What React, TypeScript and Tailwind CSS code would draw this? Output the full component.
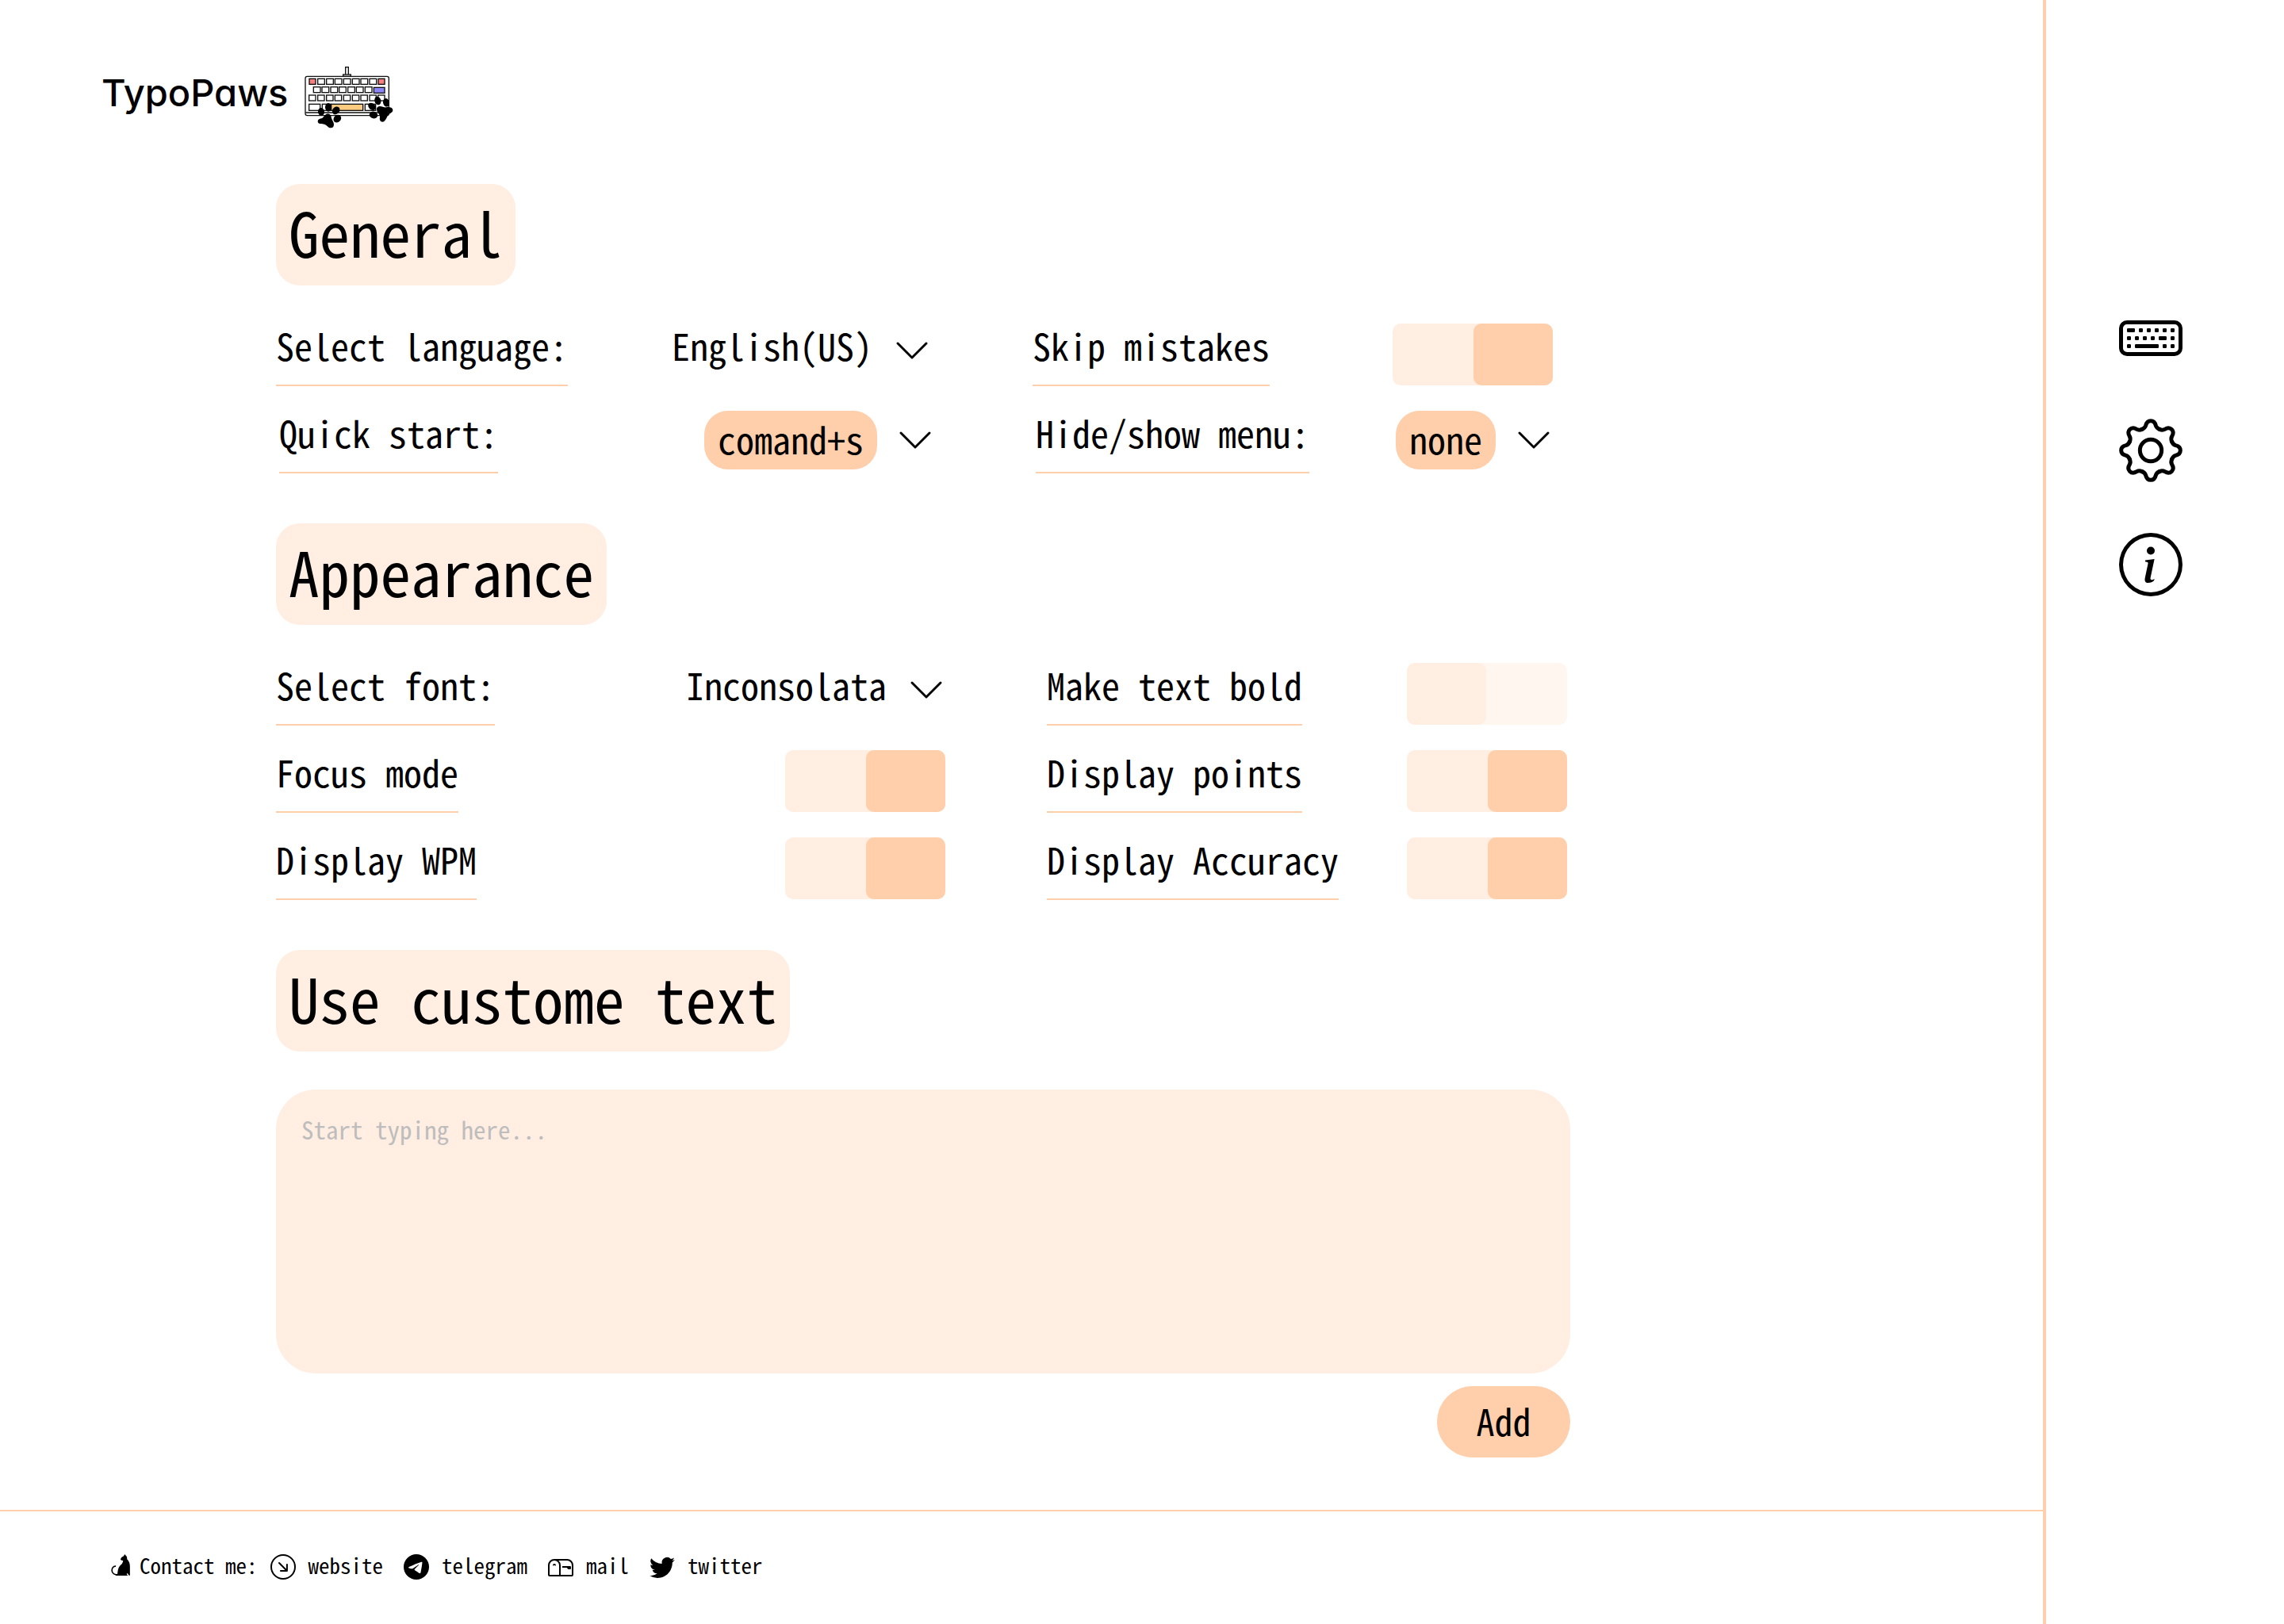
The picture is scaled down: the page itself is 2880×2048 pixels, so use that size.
import { useId } from "react";
import type { ReactNode } from "react";
import {
  BsArrowDownRightCircle,
  BsChevronDown,
  BsInfoCircle,
  BsKeyboard,
  BsMailbox,
  BsTelegram,
  BsTwitter,
} from "react-icons/bs";

function KeyboardPawsLogo() {
  const keys: [number, number, number, string][] = [
    [837, 118, 24, "#f77f80"],
    ...[869, 902, 934, 967, 1000, 1032, 1065].map((x): [number, number, number, string] => [x, 118, 26, "#fff"]),
    [1098, 118, 24, "#f77f80"],
    ...[853, 885, 918, 950, 983, 1015, 1048].map((x): [number, number, number, string] => [x, 149, 26, "#fff"]),
    [1081, 151, 41, "#8b85f7"],
    ...[836, 869, 902, 934, 967, 1000, 1032, 1065, 1097].map((x): [number, number, number, string] => [x, 180, 25, "#fff"]),
  ];
  return (
    <svg viewBox="816 69 342 240" className="h-20 w-[114px]" aria-hidden="true">
      <g stroke="#111" strokeWidth="4" fill="#fff">
        <rect x="974" y="74" width="11" height="30" />
        <rect x="965" y="102" width="29" height="7" />
        <rect x="822" y="109" width="316" height="148" rx="7" />
        <path d="M823 246H1137" />
        {keys.map(([x, y, w, fill]) => (
          <rect key={`${x}-${y}`} x={x} y={y} width={w} height={21} fill={fill} />
        ))}
        <rect x="836" y="214" width="42" height="24" />
        <rect x="886" y="214" width="32" height="24" />
        <rect x="920" y="214" width="120" height="24" fill="#fbcb80" />
        <rect x="1048" y="214" width="40" height="24" />
      </g>
      <g fill="#000">
        <ellipse cx="882" cy="243" rx="12" ry="15" transform="rotate(-8 882 243)" />
        <ellipse cx="909" cy="226" rx="12" ry="16" />
        <ellipse cx="938" cy="238" rx="13" ry="16" transform="rotate(40 938 238)" />
        <ellipse cx="943" cy="269" rx="13" ry="16" transform="rotate(45 943 269)" />
        <path d="M869 279c0-7 6-9 14-11 8-3 11-14 20-17 10-2 17 4 17 12 1 10 10 17 10 27 0 9-5 15-13 14-9-1-14-11-23-14-8-3-25 2-25-11z" />
        <ellipse cx="1096" cy="201" rx="12" ry="16" transform="rotate(-15 1096 201)" />
        <ellipse cx="1128" cy="208" rx="12" ry="16" transform="rotate(-15 1128 208)" />
        <ellipse cx="1074" cy="223" rx="12" ry="16" transform="rotate(-50 1074 223)" />
        <ellipse cx="1080" cy="255" rx="16" ry="13" transform="rotate(10 1080 255)" />
        <path d="M1092 235c-1-8 4-13 12-13 9 0 16 5 24 4 10-2 24 0 25 10 0 10-10 11-16 17-7 7-10 27-22 28-11 0-13-10-11-18 1-11-11-17-12-28z" />
      </g>
    </svg>
  );
}

function GearIcon() {
  return (
    <svg viewBox="-120 -120 240 240" className="size-20" fill="none" stroke="currentColor" strokeWidth="15" strokeLinecap="round" aria-hidden="true">
      {[0, 45, 90, 135, 180, 225, 270, 315].map((angle) => (
        <path
          key={angle}
          transform={`rotate(${angle})`}
          d="M-33 -80C-25 -83 -21 -87 -19 -94C-16 -107 -9 -112 0 -112C9 -112 16 -107 19 -94C21 -87 25 -83 33 -80"
        />
      ))}
      <circle r="41" />
    </svg>
  );
}

function CatIcon() {
  return (
    <svg viewBox="60 242 72 82" className="h-[27px] w-6" aria-hidden="true">
      <path d="M78 288C68 287 62 296 63 305C64 316 72 321 88 321" fill="none" stroke="currentColor" strokeWidth="5" />
      <path
        fill="currentColor"
        d="M112 242l5 6c4 3 4 8 4 13 8 8 11 17 11 28v34h-4l-5-8-4 3 5 6H78v-3l6-3c2-12 2-25 12-34 7-6 9-11 10-18-5 1-9-1-10-4 1-5 4-9 9-11 3-1 5-5 7-9z"
      />
    </svg>
  );
}

function SectionTitle({ children }: { children: ReactNode }) {
  return (
    <h2 className="w-fit rounded-[30px] bg-[#ffeee1] px-4 pb-[9px] text-[77px] leading-[119px]">
      {children}
    </h2>
  );
}

function Field({ label, children }: { label: string; children: (id: string) => ReactNode }) {
  const id = useId();
  return (
    <div className="flex h-[78px] items-start justify-between">
      <label htmlFor={id} className="h-[79px] border-b-2 border-[#ffceab] text-[46px] leading-[54px] whitespace-nowrap">
        {label}
      </label>
      {children(id)}
    </div>
  );
}

function SelectField({ label, value }: { label: string; value: string }) {
  return (
    <Field label={label}>
      {(id) => (
        <div className="flex items-start gap-[26px]">
          <select id={id} className="-mt-1.5 appearance-none bg-transparent text-[46px] leading-[66px]">
            <option>{value}</option>
          </select>
          <BsChevronDown className="mt-[10px] size-12" aria-hidden="true" />
        </div>
      )}
    </Field>
  );
}

function ShortcutField({ label, value }: { label: string; value: string }) {
  return (
    <Field label={label}>
      {(id) => (
        <div className="flex items-center gap-6">
          <select id={id} className="appearance-none rounded-[30px] bg-[#ffceab] px-[17px] pb-1 text-[46px] leading-[70px]">
            <option>{value}</option>
          </select>
          <BsChevronDown className="size-12" aria-hidden="true" />
        </div>
      )}
    </Field>
  );
}

function ToggleField({ label, on = true }: { label: string; on?: boolean }) {
  return (
    <Field label={label}>
      {(id) => (
        <input
          id={id}
          type="checkbox"
          role="switch"
          defaultChecked={on}
          className="h-[78px] w-[202px] appearance-none rounded-[10px] bg-[#fff6f0] before:block before:h-full before:w-[100px] before:rounded-[10px] before:bg-[#ffeee1] checked:bg-[#ffeee1] checked:before:ml-[102px] checked:before:bg-[#ffceab]"
        />
      )}
    </Field>
  );
}

function ContactLink({ icon, children }: { icon: ReactNode; children: ReactNode }) {
  return (
    <a href="#" className="flex items-start gap-4">
      {icon}
      {children}
    </a>
  );
}

export default function App() {
  return (
    <div className="flex min-h-screen bg-white font-['Noto_Sans_Mono_CJK_SC','DejaVu_Sans_Mono',monospace] text-black">
      <div className="flex flex-1 flex-col">
        <header className="flex items-center gap-5 px-32 pt-[83px] pb-[69px]">
          <span className="pb-3 font-['Inter',sans-serif] text-[47px] leading-[64px] font-medium [font-feature-settings:'cv11']">
            TypoPaws
          </span>
          <KeyboardPawsLogo />
        </header>

        <main className="flex flex-1 flex-col gap-16 pl-[348px]">
          <section className="flex flex-col gap-12">
            <SectionTitle>General</SectionTitle>
            <div className="flex max-w-[1610px] flex-col gap-8">
              <div className="grid grid-cols-[826fr_656fr] gap-32">
                <SelectField label="Select language:" value="English(US)" />
                <ToggleField label="Skip mistakes" />
              </div>
              <div className="grid grid-cols-[826fr_652fr] gap-32 pl-1">
                <ShortcutField label="Quick start:" value="comand+s" />
                <ShortcutField label="Hide/show menu:" value="none" />
              </div>
            </div>
          </section>

          <section className="flex flex-col gap-12">
            <SectionTitle>Appearance</SectionTitle>
            <div className="grid max-w-[1628px] grid-cols-[844fr_656fr] gap-x-32 gap-y-8">
              <SelectField label="Select font:" value="Inconsolata" />
              <ToggleField label="Make text bold" on={false} />
              <ToggleField label="Focus mode" />
              <ToggleField label="Display points" />
              <ToggleField label="Display WPM" />
              <ToggleField label="Display Accuracy" />
            </div>
          </section>

          <section className="flex flex-col gap-12">
            <SectionTitle>Use custome text</SectionTitle>
            <form className="flex max-w-[1632px] flex-col gap-4">
              <textarea
                aria-label="Use custome text"
                placeholder="Start typing here..."
                className="h-[358px] resize-none rounded-[50px] bg-[#ffeee1] px-8 pt-7 text-[31px] leading-[43px] placeholder:text-[#bdbdbd]"
              />
              <button type="button" className="w-[168px] self-end rounded-[45px] bg-[#ffceab] pb-1 text-[46px] leading-[86px]">
                Add
              </button>
            </form>
          </section>
        </main>

        <footer className="flex h-36 items-start gap-[26px] border-t-2 border-[#ffceab] pt-[54px] pl-[140px] text-[27px] leading-[28px]">
          <div className="flex gap-4">
            <span className="flex items-start gap-3">
              <CatIcon />
              Contact me:
            </span>
            <ContactLink icon={<BsArrowDownRightCircle className="size-8" />}>website</ContactLink>
          </div>
          <ContactLink icon={<BsTelegram className="size-8" />}>telegram</ContactLink>
          <ContactLink icon={<BsMailbox className="size-8" />}>mail</ContactLink>
          <ContactLink icon={<BsTwitter className="size-8" />}>twitter</ContactLink>
        </footer>
      </div>

      <aside className="w-[304px] border-l-4 border-[#ffceab]">
        <nav className="flex flex-col items-start gap-16 pt-96 pl-[92px]">
          <button type="button" aria-label="Typing">
            <BsKeyboard className="size-20" />
          </button>
          <button type="button" aria-label="Settings">
            <GearIcon />
          </button>
          <button type="button" aria-label="About">
            <BsInfoCircle className="size-20" />
          </button>
        </nav>
      </aside>
    </div>
  );
}
